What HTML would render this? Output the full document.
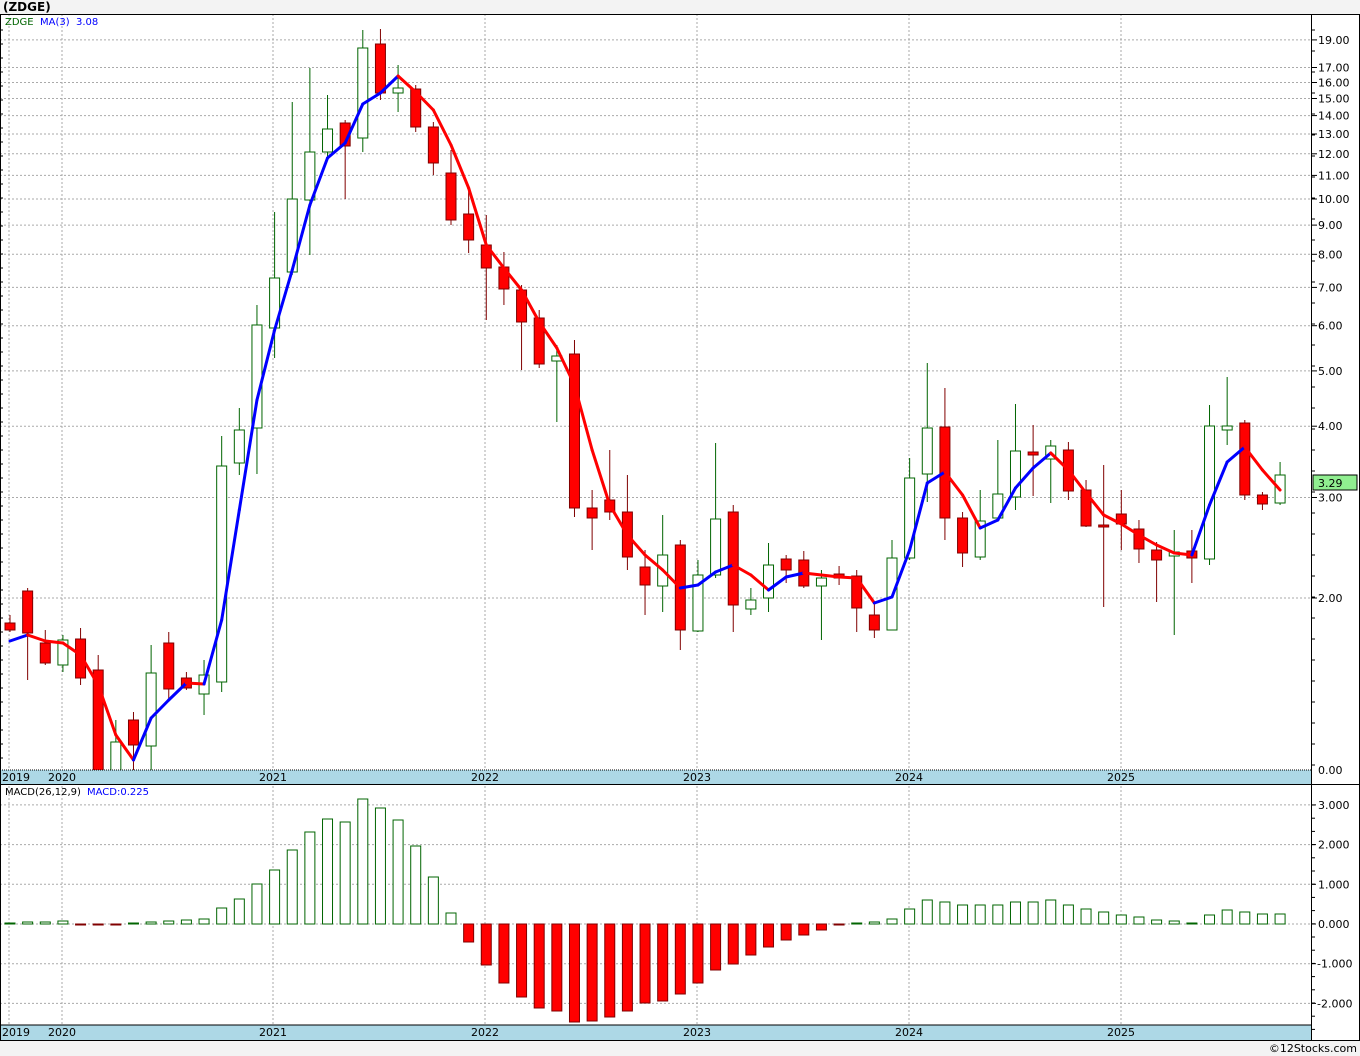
<!DOCTYPE html>
<html><head><meta charset="utf-8"><style>
html,body{margin:0;padding:0;background:#f3f3f3;width:1360px;height:1056px;overflow:hidden;font-family:"DejaVu Sans","Liberation Sans",sans-serif}
svg{position:absolute;left:0;top:0}
</style></head><body>
<svg id="s" width="1360" height="1056" xmlns="http://www.w3.org/2000/svg" font-family="DejaVu Sans, Liberation Sans, sans-serif"></svg>
<script>
const C=[[623,630,615,632,0],[591,633,588,680,0],[643,663,630,665,0],[640,665,635,672,1],[639,678,628,685,0],[670,772,655,772,0],[742,772,720,772,1],[720,745,712,770,0],[673,746,645,770,1],[643,689,632,700,0],[678,688,672,690,0],[675,694,660,715,1],[466,682,436,692,1],[430,463,408,475,1],[325,428,305,474,1],[278,328,212,358,1],[199,272,102,275,1],[152,200,68,255,1],[129,152,95,160,1],[123,146,120,199,0],[48,138,30,152,1],[44,93,29,100,0],[88,93,65,112,1],[89,127,85,132,0],[127,163,122,175,0],[173,220,150,225,0],[214,240,190,253,0],[245,268,215,320,0],[267,289,252,305,0],[290,322,285,370,0],[318,364,310,368,0],[356,361,345,422,1],[354,508,340,517,0],[508,518,490,550,0],[500,512,450,520,0],[512,557,475,570,0],[567,585,550,615,0],[555,586,515,612,1],[545,630,540,650,0],[575,631,560,632,1],[519,575,443,578,1],[512,605,505,632,0],[600,609,588,615,1],[565,598,543,612,1],[559,570,555,583,0],[560,586,551,588,0],[578,586,570,640,1],[574,578,566,585,0],[576,608,570,632,0],[615,630,603,638,0],[558,630,540,630,1],[478,558,458,560,1],[428,474,363,502,1],[427,518,388,540,0],[518,553,512,567,0],[521,557,490,560,1],[494,518,440,520,1],[451,497,404,510,1],[452,455,425,496,0],[446,459,440,503,1],[450,491,442,500,0],[490,526,480,527,0],[525,527,465,607,0],[514,524,490,550,0],[529,549,520,563,0],[550,560,542,602,0],[552,556,530,635,1],[551,558,530,583,0],[426,559,405,565,1],[426,430,377,445,1],[423,495,420,500,0],[495,504,492,510,0],[475,503,462,505,1]];
const MA=[641,635,641,643,655,685,735,760,718,700,683,684,620,510,400,330,270,205,158,143,104,93,76,92,110,145,188,245,268,290,322,348,385,450,505,535,555,570,588,585,572,565,575,590,577,573,575,577,578,603,597,550,483,472,495,528,520,488,468,453,470,493,515,524,535,545,553,555,505,462,447,470,490];
const M=[923,922,922,921,925,925,925,923,922,921,920,919,908,899,884,870,850,832,819,822,799,808,820,846,877,913,942,965,983,997,1008,1011,1022,1021,1017,1011,1003,1001,994,983,970,964,955,947,940,935,930,925,923,922,919,909,900,902,905,905,905,902,902,900,905,909,912,915,917,920,921,923,915,910,912,914,914];
const X=i=>10+17.64*i;
let h='';
h+='<rect x="0" y="0" width="1360" height="1056" fill="#f3f3f3"/>';
h+='<text x="3" y="11" font-size="12" font-weight="bold" fill="#000">(ZDGE)</text>';
h+='<rect x="0" y="14" width="1360" height="1026" fill="#fff"/>';
const py=p=>598-247.9*Math.log(p/2);
const ticks=[19,17,16,15,14,13,12,11,10,9,8,7,6,5,4,3,2];
ticks.forEach(p=>{const y=py(p).toFixed(1);h+=`<line x1="0" y1="${y}" x2="1311" y2="${y}" stroke="#aaa" stroke-dasharray="2,2"/>`;h+=`<line x1="1311" y1="${y}" x2="1317" y2="${y}" stroke="#000"/><text x="1318" y="${+y+4}" font-size="11" fill="#000">${p.toFixed(2)}</text>`;});
const yrs=[[9,'2019',16],[62,'2020',62],[273,'2021',273],[485,'2022',485],[697,'2023',697],[909,'2024',909],[1121,'2025',1121]];
yrs.forEach(([x])=>{h+=`<line x1="${x}" y1="14" x2="${x}" y2="1025" stroke="#aaa" stroke-dasharray="2,2"/>`});
[0,1,2,3,-1,-2].forEach(v=>{const y=924-39.7*v;h+=`<line x1="0" y1="${y}" x2="1311" y2="${y}" stroke="#aaa" stroke-dasharray="2,2"/><line x1="1311" y1="${y}" x2="1316" y2="${y}" stroke="#000"/><text x="${v<0?1317:1318}" y="${y+4}" font-size="11" fill="#000">${v<0?'-'+Math.abs(v).toFixed(3):v.toFixed(3)}</text>`;});
for(let y=30;y<770;y+=21){h+=`<line x1="1311" y1="${y}" x2="1315" y2="${y}" stroke="#000"/>`}
for(let y=805;y<1040;y+=13.2){h+=`<line x1="1311" y1="${y}" x2="1315" y2="${y}" stroke="#000"/>`}
C.forEach(([t,b,hi,lo,up],i)=>{const x=X(i);const wc=up?'#006400':'#800000';
h+=`<line x1="${x}" y1="${hi}" x2="${x}" y2="${lo}" stroke="${wc}"/>`;
h+=`<rect x="${x-5}" y="${t}" width="10" height="${Math.max(b-t,2)}" fill="${up?'#fff':'#f00'}" stroke="${wc}"/>`;});
for(let i=1;i<MA.length;i++){h+=`<line x1="${X(i-1)}" y1="${MA[i-1]}" x2="${X(i)}" y2="${MA[i]}" stroke="${MA[i]<MA[i-1]?'#00f':'#f00'}" stroke-width="3" stroke-linecap="round"/>`}
h+='<rect x="0" y="770" width="1311" height="14" fill="#add8e6"/><line x1="0" y1="770" x2="1311" y2="770" stroke="#000" stroke-dasharray="1,1"/>';
h+='<rect x="0" y="1025" width="1311" height="15" fill="#add8e6"/><line x1="0" y1="1025" x2="1311" y2="1025" stroke="#000"/>';
yrs.forEach(([x,l,c])=>{h+=`<text x="${c}" y="781" font-size="11" text-anchor="middle">${l}</text><text x="${c}" y="1036" font-size="11" text-anchor="middle">${l}</text>`});
h+='<text x="1318" y="774" font-size="11">0.00</text>';
M.forEach((y,i)=>{const x=X(i);if(y<924)h+=`<rect x="${x-5}" y="${y}" width="10" height="${924-y}" fill="#fff" stroke="#006400"/>`;else h+=`<rect x="${x-5}" y="924" width="10" height="${Math.max(y-924,1)}" fill="#f00" stroke="#800000"/>`;});
h+='<line x1="0" y1="14.5" x2="1360" y2="14.5" stroke="#000"/><line x1="0" y1="784.5" x2="1360" y2="784.5" stroke="#000"/><line x1="0" y1="1040.5" x2="1360" y2="1040.5" stroke="#000"/><line x1="1311.5" y1="14" x2="1311.5" y2="1040" stroke="#000"/><line x1="1359.5" y1="14" x2="1359.5" y2="1040" stroke="#000"/><line x1="0.5" y1="14" x2="0.5" y2="1040" stroke="#000"/>';
for(let y=30;y<770;y+=14){h+=`<line x1="0" y1="${y}" x2="3" y2="${y}" stroke="#000"/>`}
h+='<text x="5" y="25" font-size="10" fill="#006400">ZDGE</text><text x="40" y="25" font-size="10" fill="#00f">MA(3)</text><text x="76" y="25" font-size="10" fill="#00f">3.08</text>';
h+='<text x="5" y="795" font-size="10" fill="#000">MACD(26,12,9)</text><text x="87" y="795" font-size="10" fill="#00f">MACD:0.225</text>';
h+='<rect x="1313" y="475" width="44" height="15" fill="#90ee90" stroke="#000"/><text x="1318" y="487" font-size="11">3.29</text>';
h+='<text x="1357" y="1052" font-size="11" text-anchor="end">©12Stocks.com</text>';
document.getElementById('s').innerHTML=h;
</script>
</body></html>
